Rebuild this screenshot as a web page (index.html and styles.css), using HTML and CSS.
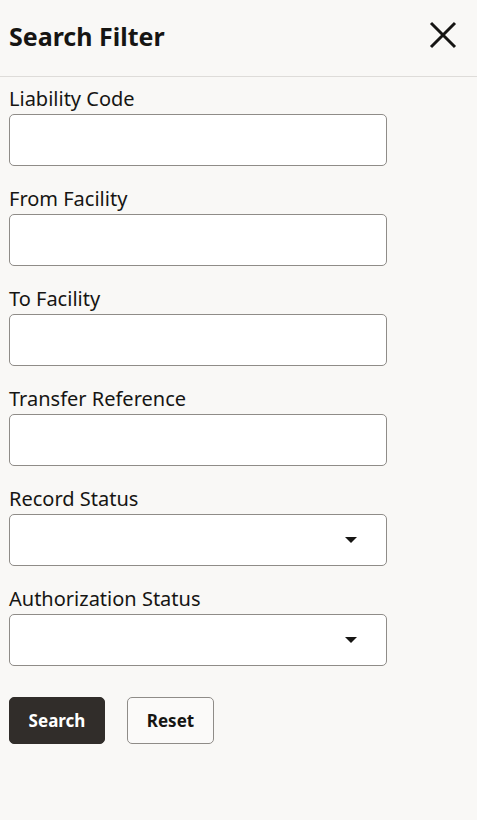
FILE: index.html
```html
<!DOCTYPE html>
<html lang="en">
<head>
<meta charset="utf-8">
<title>Search Filter</title>
<link rel="stylesheet" href="styles.css">
</head>
<body>
<div class="panel">
  <header class="header">
    <h1 class="title">Search Filter</h1>
    <button class="close" aria-label="Close">
      <svg width="28" height="28" viewBox="0 0 28 28"><path d="M2 2 L26 26 M26 2 L2 26" stroke="#161513" stroke-width="3" fill="none"/></svg>
    </button>
  </header>
  <form class="form">
    <div class="field">
      <label class="label">Liability Code</label>
      <div class="input"></div>
    </div>
    <div class="field">
      <label class="label">From Facility</label>
      <div class="input"></div>
    </div>
    <div class="field">
      <label class="label">To Facility</label>
      <div class="input"></div>
    </div>
    <div class="field">
      <label class="label">Transfer Reference</label>
      <div class="input"></div>
    </div>
    <div class="field">
      <label class="label">Record Status</label>
      <div class="input select"><span class="caret"></span></div>
    </div>
    <div class="field">
      <label class="label">Authorization Status</label>
      <div class="input select"><span class="caret"></span></div>
    </div>
    <div class="actions">
      <button type="button" class="btn primary">Search</button>
      <button type="button" class="btn secondary">Reset</button>
    </div>
  </form>
</div>
</body>
</html>
```
FILE: styles.css
```css
html, body {
  margin: 0;
  padding: 0;
  background: #f9f8f6;
  font-family: "Noto Sans", "Open Sans", sans-serif;
  color: #161513;
}
.panel {
  width: 477px;
  min-height: 820px;
}
.header {
  height: 77px;
  box-sizing: border-box;
  border-bottom: 1px solid #dedcd9;
  display: flex;
  align-items: center;
  justify-content: space-between;
  padding: 0 20px 0 9px;
}
.title {
  margin: 0;
  font-size: 25px;
  font-weight: 700;
  line-height: 1;
  position: relative;
  top: -2px;
}
.close {
  border: 0;
  background: none;
  padding: 0;
  width: 28px;
  height: 28px;
  display: flex;
  cursor: pointer;
  position: relative;
  top: -3px;
}
.form {
  padding: 10px 9px 0 9px;
  display: flex;
  flex-direction: column;
  gap: 21px;
}
.field {
  display: flex;
  flex-direction: column;
  gap: 3px;
}
.label {
  font-size: 20px;
  line-height: 24px;
  color: #161513;
}
.input {
  width: 378px;
  height: 52px;
  box-sizing: border-box;
  background: #ffffff;
  border: 1px solid #8f8c88;
  border-radius: 5px;
  display: flex;
  align-items: center;
  justify-content: flex-end;
  padding-right: 29px;
}
.caret {
  width: 0;
  height: 0;
  border-left: 6px solid transparent;
  border-right: 6px solid transparent;
  border-top: 6px solid #161513;
}
.actions {
  display: flex;
  gap: 22px;
  margin-top: 10px;
}
.btn {
  height: 47px;
  box-sizing: border-box;
  border-radius: 5px;
  font-family: "Noto Sans", sans-serif;
  font-size: 17px;
  font-weight: 700;
  padding: 0;
}
.primary {
  width: 96px;
  background: #312d2a;
  color: #ffffff;
  border: 1px solid #312d2a;
}
.secondary {
  width: 87px;
  background: #fbfaf9;
  color: #161513;
  border: 1px solid #8f8c88;
}
```
